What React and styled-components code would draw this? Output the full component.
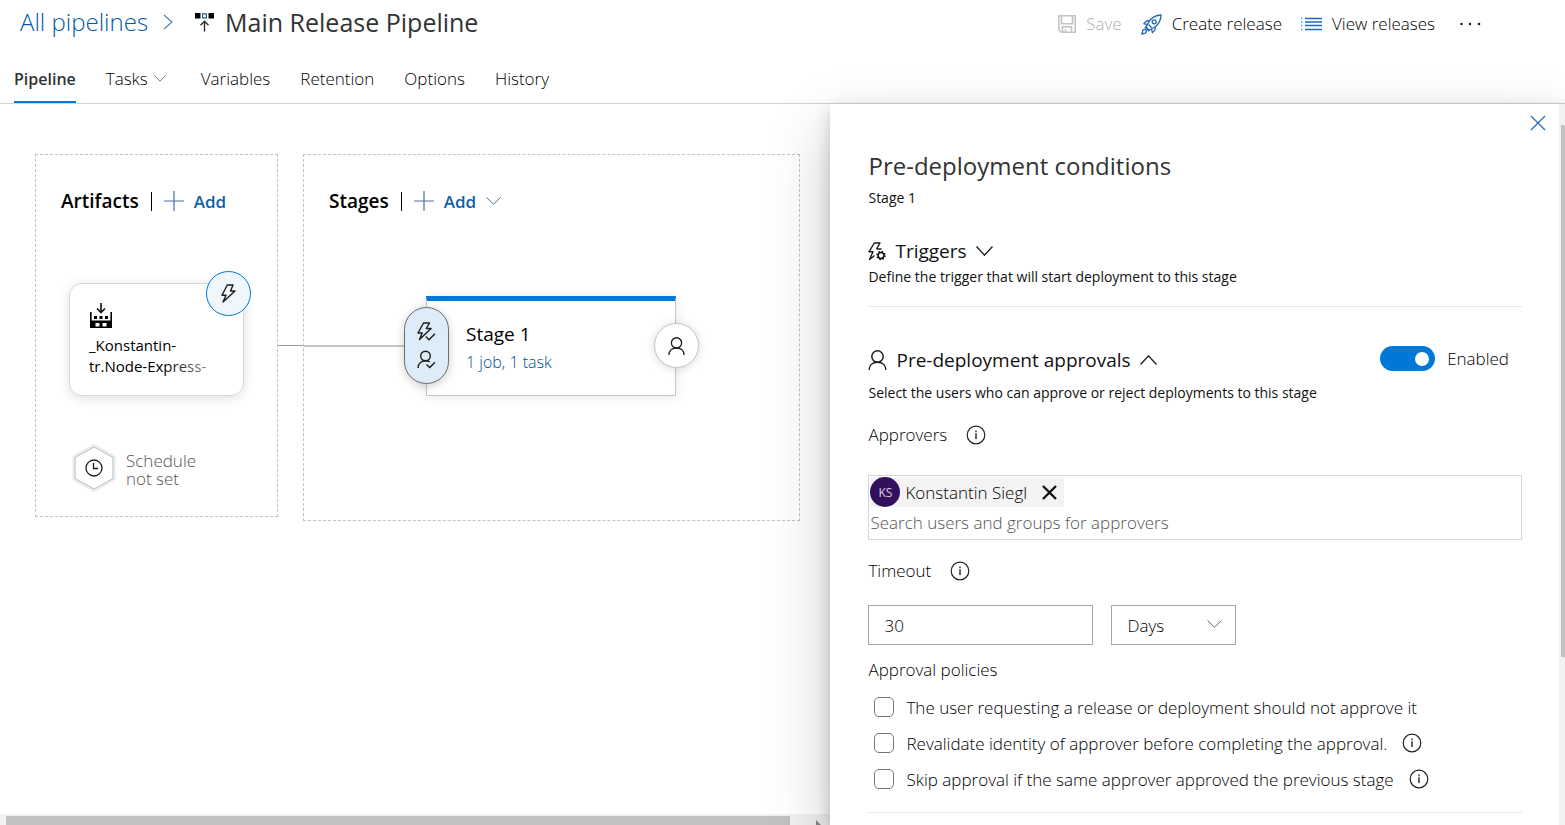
import React, { useState } from "react";
import styled, { createGlobalStyle } from "styled-components";

const GlobalStyle = createGlobalStyle`
  *, *::before, *::after { box-sizing: border-box; }
  html, body { margin: 0; height: 100%; overflow: hidden; }
  body, button, input, select {
    font-family: "Segoe UI", "Open Sans", "Noto Sans", sans-serif;
    font-weight: 300;
    color: #000;
  }
  body { font-size: 17px; background: #fff; }
  button { background: none; border: 0; padding: 0; font-size: inherit; cursor: pointer; }
  h1, h2, h3, p { margin: 0; font-weight: 400; }
  fieldset, legend { margin: 0; padding: 0; border: 0; }
  svg { display: block; flex: none; }
`;

const Page = styled.div`
  display: flex;
  flex-direction: column;
  height: 100vh;
`;

const Header = styled.header`
  border-bottom: 1px solid #d2d2d2;
`;

const TitleBar = styled.div`
  display: flex;
  align-items: center;
  justify-content: space-between;
  height: 46px;
  padding: 0 84px 0 20px;
`;

const Breadcrumb = styled.nav`
  display: flex;
  align-items: center;
  padding-bottom: 2px;
  font-size: 24px;
  line-height: 32px;
  a { color: #005aa8; font-weight: 300; text-decoration: none; }
  > svg:first-of-type { margin: 0 22px 0 15px; }
  h1 { margin-left: 11px; font-size: 25px; color: #333; }
`;

const Actions = styled.div`
  display: flex;
  align-items: center;
  gap: 19px;
  padding-top: 2px;
  > :last-child { padding-left: 6px; }
`;

const ActionButton = styled.button`
  display: flex;
  align-items: center;
  gap: 10px;
  line-height: 24px;
  &:disabled { color: #b0b0b0; cursor: default; }
`;

const Tabs = styled.nav`
  display: flex;
  gap: 30px;
  padding: 0 14px;
`;

const Tab = styled.a`
  display: flex;
  align-items: center;
  gap: 6px;
  height: 57px;
  padding: 10px ${(p) => (p.$menu ? "5px" : "0")} 0 0;
  border-bottom: 2px solid ${(p) => (p.$active ? "#0078d7" : "transparent")};
  font-size: ${(p) => (p.$active ? "16px" : "17px")};
  font-weight: ${(p) => (p.$active ? 600 : 300)};
  color: ${(p) => (p.$active ? "#333" : "#000")};
  text-decoration: none;
`;

const Body = styled.div`
  display: flex;
  flex: 1;
  min-height: 0;
`;

const Workspace = styled.main`
  display: flex;
  flex-direction: column;
  flex: 1;
  min-width: 0;
`;

const Canvas = styled.div`
  display: flex;
  align-items: flex-start;
  flex: 1;
  padding: 50px 30px 0 35px;
`;

const Group = styled.section`
  flex: ${(p) => (p.$grow ? "1" : "0 0 243px")};
  border: 1px dashed #c2c2c2;
  padding: ${(p) => (p.$grow ? "32px 0 124px" : "32px 33px 24px")};
`;

const GroupHeader = styled.div`
  display: flex;
  align-items: center;
  height: 28px;
  margin-left: ${(p) => p.$indent}px;
  white-space: nowrap;
  h2 {
    padding-right: 12px;
    border-right: 1px solid #000;
    font-size: 19px;
    font-weight: 600;
    line-height: 19px;
    color: #000;
  }
`;

const AddButton = styled.button`
  display: flex;
  align-items: center;
  gap: 10px;
  margin-left: 12px;
  font-size: 17px;
  font-weight: 600;
  color: #0f5fa8;
`;

const ArtifactCard = styled.article`
  position: relative;
  width: 175px;
  margin-top: 68px;
  padding: 19px 19px 18px;
  border: 1px solid #d6d6d6;
  border-radius: 13px;
  box-shadow: 0 2px 12px rgba(0, 0, 0, 0.13);
`;

const ArtifactName = styled.p`
  position: relative;
  margin-top: 7px;
  font-size: 15px;
  line-height: 21px;
  color: #000;
  white-space: nowrap;
  &::after {
    content: "";
    position: absolute;
    right: 0;
    bottom: 0;
    width: 60px;
    height: 21px;
    background: linear-gradient(90deg, rgba(255, 255, 255, 0), rgba(255, 255, 255, 0.75));
  }
`;

const RoundBadge = styled.button`
  position: absolute;
  display: flex;
  align-items: center;
  justify-content: center;
  width: 45px;
  height: 45px;
  border-radius: 50%;
`;

const TriggerBadge = styled(RoundBadge)`
  top: -13px;
  right: -8px;
  border: 1px solid #0078d7;
  background: #eff6fc;
`;

const PostBadge = styled(RoundBadge)`
  top: 22px;
  right: -24px;
  border: 1px solid #c4c4c4;
  background: #fff;
  box-shadow: 0 1px 10px rgba(0, 0, 0, 0.15);
`;

const Schedule = styled.button`
  display: flex;
  align-items: center;
  gap: 10px;
  margin: 48px 0 0 3px;
  line-height: 18px;
  text-align: left;
  color: #555;
  span { padding-top: 3px; }
`;

const Link = styled.div`
  flex: 0 0 25px;
  height: 1px;
  margin-top: 191px;
  background: #9b9b9b;
`;

const StageRow = styled.div`
  display: flex;
  align-items: center;
  margin-top: 81px;
`;

const StageLink = styled.div`
  flex: 0 0 122px;
  height: 2px;
  background: #c6c6c6;
`;

const StageCard = styled.article`
  position: relative;
  width: 250px;
  height: 100px;
  padding: 19px 0 0 39px;
  border: 1px solid #c4c4c4;
  border-top: 5px solid #0078d7;
  box-shadow: 0 1px 12px rgba(0, 0, 0, 0.1);
  h3 { font-size: 19px; line-height: 28px; color: #000; }
  a { display: block; font-size: 16px; line-height: 28px; color: #004f94; text-decoration: none; }
`;

const PreBadge = styled.button`
  position: absolute;
  top: 6px;
  left: -23px;
  display: flex;
  flex-direction: column;
  align-items: center;
  justify-content: center;
  gap: 9px;
  width: 45px;
  height: 77px;
  border: 1px solid #6e6e6e;
  border-radius: 23px;
  background: #deecf9;
  box-shadow: 0 2px 10px rgba(0, 0, 0, 0.2);
`;

const HorizontalScroll = styled.div`
  display: flex;
  justify-content: space-between;
  height: 11px;
  padding: 2px 8px 0 6px;
  background: #f1f1f1;
  overflow: hidden;
  svg { margin-top: 4px; }
`;

const HorizontalThumb = styled.div`
  width: 96%;
  height: 9px;
  background: #c1c1c1;
`;

const Panel = styled.aside`
  position: relative;
  display: flex;
  width: calc(47% - 1px);
  background: #fff;
  box-shadow: 0 25px 58px rgba(0, 0, 0, 0.22), 0 5px 14px rgba(0, 0, 0, 0.18);
`;

const PanelContent = styled.div`
  flex: 1;
  min-width: 0;
  padding: 0 37px 0 38px;
  overflow: hidden;
`;

const PanelTop = styled.div`
  display: flex;
  justify-content: flex-end;
  height: 46px;
  margin-right: -24px;
  padding-top: 11px;
  button { height: 16px; }
`;

const PanelTitle = styled.h2`
  font-size: 24px;
  line-height: 32px;
  color: #333;
`;

const SmallText = styled.p`
  margin-top: ${(p) => p.$top}px;
  font-size: 14px;
  line-height: 20px;
  color: #111;
`;

const Section = styled.section`
  padding: ${(p) => p.$top}px 0 19px;
  border-bottom: 1px solid #e8e8e8;
`;

const SectionBar = styled.div`
  display: flex;
  align-items: flex-start;
  justify-content: space-between;
`;

const SectionButton = styled.button`
  display: flex;
  align-items: center;
  gap: 9px;
  font-size: 19px;
  font-weight: 400;
  line-height: 28px;
  color: #111;
`;

const ToggleLabel = styled.label`
  display: flex;
  align-items: center;
  gap: 12px;
  margin-right: 13px;
  line-height: 22px;
`;

const Toggle = styled.input`
  appearance: none;
  display: flex;
  align-items: center;
  justify-content: ${(p) => (p.checked ? "flex-end" : "flex-start")};
  width: 55px;
  height: 25px;
  margin: 0;
  padding: 0 6px;
  border-radius: 13px;
  background: ${(p) => (p.checked ? "#0078d7" : "#8a8a8a")};
  &::before {
    content: "";
    width: 14px;
    height: 14px;
    border-radius: 50%;
    background: #fff;
  }
`;

const FieldLabel = styled.div`
  display: flex;
  align-items: center;
  gap: 19px;
  margin-top: ${(p) => p.$top}px;
  line-height: 24px;
`;

const InfoButton = styled.button`
  line-height: 0;
`;

const PeoplePicker = styled.div`
  margin-top: 28px;
  padding: 1px;
  border: 1px solid #d6d6d6;
  input {
    display: block;
    width: 100%;
    height: 31px;
    padding: 0;
    border: 0;
    outline: 0;
    font-size: 17px;
    &::placeholder { color: #555; opacity: 1; }
  }
`;

const Persona = styled.div`
  display: inline-flex;
  align-items: center;
  height: 30px;
  padding-right: 7px;
  background: #f3f3f3;
  vertical-align: top;
  color: #000;
  button { margin-left: 15px; }
`;

const Avatar = styled.span`
  display: flex;
  align-items: center;
  justify-content: center;
  width: 30px;
  height: 30px;
  margin-right: 5px;
  border-radius: 50%;
  background: #32105c;
  font-size: 12px;
  font-weight: 400;
  color: #d9d2e2;
`;

const Duration = styled.div`
  display: flex;
  gap: 18px;
  margin-top: 22px;
`;

const NumberInput = styled.input`
  width: 225px;
  height: 40px;
  padding: 0 15px;
  border: 1px solid #a6a6a6;
  font-size: 17px;
`;

const SelectBox = styled.div`
  position: relative;
  width: 125px;
  select {
    appearance: none;
    width: 100%;
    height: 40px;
    padding: 0 15px;
    border: 1px solid #a6a6a6;
    border-radius: 0;
    background: #fff;
    font-size: 17px;
  }
  svg { position: absolute; top: 15px; right: 14px; pointer-events: none; }
`;

const Policies = styled.fieldset`
  display: flex;
  flex-direction: column;
  gap: 12px;
  margin-top: 13px;
  padding-bottom: 2px;
  legend { margin-bottom: 13px; line-height: 24px; }
`;

const Policy = styled.div`
  display: flex;
  align-items: center;
  height: 24px;
  gap: 15px;
  padding-left: 6px;
  label { display: flex; align-items: center; gap: 12px; white-space: nowrap; }
  input {
    appearance: none;
    flex: none;
    width: 20px;
    height: 20px;
    margin: 0;
    border: 1px solid #767676;
    border-radius: 5px;
    background: #fff;
    &:checked { background: #0078d7; }
  }
`;

const VerticalScroll = styled.div`
  flex: 0 0 6px;
  padding: 21px 0 0 2px;
  background: #f1f1f1;
`;

const VerticalThumb = styled.div`
  height: 76%;
  background: #c1c1c1;
`;

function Icon({ w, h, color = "#1b1b1b", stroke = 1.4, children }) {
  return (
    <svg width={w} height={h} viewBox={`0 0 ${w} ${h}`} fill="none" stroke={color} strokeWidth={stroke} aria-hidden="true">
      {children}
    </svg>
  );
}

const Chevron = ({ w = 12, h = 7, up, color, stroke = 1 }) => (
  <Icon w={w} h={h} color={color} stroke={stroke}>
    <path d={up ? `M.5 ${h - 0.5}L${w / 2} .8 ${w - 0.5} ${h - 0.5}` : `M.5 .5L${w / 2} ${h - 0.8} ${w - 0.5} .5`} />
  </Icon>
);

const PlusIcon = () => (
  <Icon w={20} h={20} color="#4a6fa8" stroke={1.2}><path d="M10 0v20M0 10h20" /></Icon>
);

const CrossIcon = ({ size, color, stroke }) => (
  <Icon w={size} h={size} color={color} stroke={stroke}>
    <path d={`M1 1L${size - 1} ${size - 1}M${size - 1} 1L1 ${size - 1}`} />
  </Icon>
);

const ReleaseIcon = () => (
  <Icon w={19} h={19} color="#111">
    <path d="M0 0h5.500v5.500H0zM13.500 0H19v5.500h-5.500z" fill="#000" stroke="none" />
    <path d="M7.600 .8h3.800v4H7.600z" stroke="#2b5f8a" strokeWidth="1.200" />
    <path d="M9.500 18.500V8.500M5.500 12.300l4-4 4 4" stroke="#3a2a20" />
  </Icon>
);

const SaveIcon = () => (
  <Icon w={18} h={18} color="#c4c4c4" stroke={1.6}>
    <path d="M.8.8h16.4v16.4H3.3L.8 14.7zM3.5.8v8h11v-8M4.5 17v-5.2h9V17M7.5 17v-2.6" />
  </Icon>
);

const RocketIcon = () => (
  <Icon w={21} h={21} color="#2168b8" stroke={1.3}>
    <path d="M20 1c-5 .2-8.600 1.900-11.400 5.700L5 13l3.200 3.200 6.100-3.500C18.200 9.700 19.900 6 20 1z" />
    <circle cx="13.200" cy="7.800" r="2" />
    <path d="M9 6.700L5.500 7 3 9.600l3.500 1M14.300 12.500l-.3 3.500-2.600 2.600-1-3.800M7.500 10.500l3.200 3.200M5.300 12.500l-1 1 3.400 3.400 1-1" />
    <path d="M1 20l.8-3.600c.8-1.400 2.700-1.300 3.200-.3.600 1.100.2 2.400-.8 3z" />
  </Icon>
);

const ListIcon = () => (
  <Icon w={21} h={14} color="#2168b8" stroke={1.3}>
    <path d="M4 1.500h17M4 5h17M4 8.500h17M4 12.500h17" />
    <path d="M0 1.500h1.500M0 5h1.500M0 8.500h1.500M0 12.500h1.500" stroke="#4fa3dc" />
  </Icon>
);

const MoreIcon = () => (
  <Icon w={21} h={4}>
    <g fill="#222" stroke="none"><circle cx="1.500" cy="2" r="1.300" /><circle cx="10" cy="2" r="1.300" /><circle cx="19" cy="2" r="1.300" /></g>
  </Icon>
);

const BoltIcon = () => (
  <Icon w={15} h={19}><path d="M6.300 1H12L9.500 7H14L2 18l3-6.800H1z" strokeLinejoin="round" /></Icon>
);

const BoltCheckIcon = () => (
  <Icon w={19} h={19}>
    <path d="M6.500 1h6L9.300 6.500h4.800L2.500 17.500 5.200 11H1z" strokeLinejoin="round" />
    <path d="M8.800 14.500l3.200 3.200 6-6" />
  </Icon>
);

const PersonCheckIcon = () => (
  <Icon w={19} h={19}>
    <circle cx="8.500" cy="6" r="4.800" />
    <path d="M1 18c.2-4.300 3.300-7.200 7.500-7.200 1.600 0 3 .4 4.200 1.200" />
    <path d="M9.500 14.500l3.200 3 5.300-5.300" />
  </Icon>
);

const PersonIcon = ({ size = 18 }) => (
  <svg width={size} height={size + 1} viewBox="0 0 18 19" fill="none" stroke="#1b1b1b" strokeWidth="1.400" aria-hidden="true">
    <circle cx="9" cy="6.200" r="5.400" />
    <path d="M1 19c0-4.800 3.400-7.400 8-7.400s8 2.600 8 7.400" />
  </svg>
);

const BoltGearIcon = () => (
  <Icon w={18} h={19}>
    <path d="M8.500 7L12 1H6.300L1 9.800h4L1.500 17.500l5-4M8.500 7h5" strokeLinejoin="round" />
    <circle cx="13" cy="13.500" r="2.900" stroke="#111" strokeWidth="1.500" />
    <circle cx="13" cy="13.500" r="4" stroke="#111" strokeWidth="1.400" strokeDasharray="1.600 1.540" />
  </Icon>
);

const BuildIcon = () => (
  <Icon w={24} h={25} color="#111">
    <path d="M12 0v9.500M8 5.500l4 4 4-4" strokeWidth="1.600" />
    <path d="M1 9h1.600v8.500h18.800V9H23v16H1z" fill="#000" stroke="none" />
    <path d="M5 13h3v3H5zM10.500 13h3v3h-3zM16 13h3v3h-3z" fill="#000" stroke="none" />
    <path d="M6.500 20h4v3.500h-4zM13.500 20h4v3.500h-4z" fill="#fff" stroke="none" />
  </Icon>
);

const ScheduleIcon = () => (
  <Icon w={44} h={48}>
    <path d="M22 1.500l20 11.300v22.400L22 46.500 2 35.200V12.800z" stroke="#ececec" strokeWidth="3" />
    <path d="M22 3l19 10.500v21L22 45 3 34.500v-21z" fill="#fff" stroke="#bdbdbd" strokeWidth="1" />
    <circle cx="22" cy="24" r="8" strokeWidth="1.300" />
    <path d="M21.500 19v5.500H26" strokeWidth="1.300" />
  </Icon>
);

const InfoIcon = () => (
  <Icon w={20} h={20} color="#222" stroke={1.2}>
    <circle cx="10" cy="10" r="8.800" />
    <path d="M10 8.300V14M10 5.600v1.600" strokeWidth="1.400" />
  </Icon>
);

const Info = ({ label }) => (
  <InfoButton type="button" aria-label={label}><InfoIcon /></InfoButton>
);

const TABS = ["Pipeline", "Tasks", "Variables", "Retention", "Options", "History"];

const POLICIES = [
  { id: "requester", text: "The user requesting a release or deployment should not approve it" },
  { id: "revalidate", text: "Revalidate identity of approver before completing the approval.", info: true },
  { id: "skip", text: "Skip approval if the same approver approved the previous stage", info: true },
];

export default function App() {
  const [enabled, setEnabled] = useState(true);

  return (
    <Page>
      <GlobalStyle />
      <Header>
        <TitleBar>
          <Breadcrumb>
            <a href="#all">All pipelines</a>
            <Icon w={10} h={16} color="#4b84b8" stroke={1.2}><path d="M1 1l8 7-8 7" /></Icon>
            <ReleaseIcon />
            <h1>Main Release Pipeline</h1>
          </Breadcrumb>
          <Actions>
            <ActionButton disabled><SaveIcon />Save</ActionButton>
            <ActionButton><RocketIcon />Create release</ActionButton>
            <ActionButton><ListIcon />View releases</ActionButton>
            <ActionButton aria-label="More actions"><MoreIcon /></ActionButton>
          </Actions>
        </TitleBar>
        <Tabs>
          {TABS.map((name) => (
            <Tab key={name} href={`#${name}`} $active={name === "Pipeline"} $menu={name === "Tasks"}>
              {name}
              {name === "Tasks" && <Chevron color="#777" />}
            </Tab>
          ))}
        </Tabs>
      </Header>

      <Body>
        <Workspace>
          <Canvas>
            <Group>
              <GroupHeader $indent={-8}>
                <h2>Artifacts</h2>
                <AddButton><PlusIcon />Add</AddButton>
              </GroupHeader>
              <ArtifactCard>
                <BuildIcon />
                <ArtifactName>_Konstantin-<br />tr.Node-Express-</ArtifactName>
                <TriggerBadge aria-label="Continuous deployment trigger"><BoltIcon /></TriggerBadge>
              </ArtifactCard>
              <Schedule>
                <ScheduleIcon />
                <span>Schedule<br />not set</span>
              </Schedule>
            </Group>
            <Link />
            <Group $grow>
              <GroupHeader $indent={25}>
                <h2>Stages</h2>
                <AddButton><PlusIcon />Add<Chevron w={15} h={8} color="#4a6fa8" /></AddButton>
              </GroupHeader>
              <StageRow>
                <StageLink />
                <StageCard>
                  <h3>Stage 1</h3>
                  <a href="#tasks">1 job, 1 task</a>
                  <PreBadge aria-label="Pre-deployment conditions"><BoltCheckIcon /><PersonCheckIcon /></PreBadge>
                  <PostBadge aria-label="Post-deployment conditions"><PersonIcon size={17} /></PostBadge>
                </StageCard>
              </StageRow>
            </Group>
          </Canvas>
          <HorizontalScroll>
            <HorizontalThumb />
            <Icon w={6} h={8}><path d="M0 0l6 6v2H0z" fill="#8a8a8a" stroke="none" /></Icon>
          </HorizontalScroll>
        </Workspace>

        <Panel>
          <PanelContent>
            <PanelTop>
              <button aria-label="Close"><CrossIcon size={16} color="#2168b8" stroke={1.2} /></button>
            </PanelTop>
            <PanelTitle>Pre-deployment conditions</PanelTitle>
            <SmallText $top={6}>Stage 1</SmallText>

            <Section $top={29}>
              <SectionButton><BoltGearIcon />Triggers<Chevron w={17} h={10} stroke={1.3} /></SectionButton>
              <SmallText $top={2}>Define the trigger that will start deployment to this stage</SmallText>
            </Section>

            <Section $top={39}>
              <SectionBar>
                <SectionButton><PersonIcon size={19} />Pre-deployment approvals<Chevron w={17} h={10} up stroke={1.3} /></SectionButton>
                <ToggleLabel>
                  <Toggle type="checkbox" role="switch" checked={enabled} onChange={(e) => setEnabled(e.target.checked)} />
                  Enabled
                </ToggleLabel>
              </SectionBar>
              <SmallText $top={9}>Select the users who can approve or reject deployments to this stage</SmallText>

              <FieldLabel $top={20}><label htmlFor="approvers">Approvers</label><Info label="About approvers" /></FieldLabel>
              <PeoplePicker>
                <Persona>
                  <Avatar>KS</Avatar>
                  Konstantin Siegl
                  <button aria-label="Remove Konstantin Siegl"><CrossIcon size={15} color="#111" stroke={2.4} /></button>
                </Persona>
                <input id="approvers" placeholder="Search users and groups for approvers" />
              </PeoplePicker>

              <FieldLabel $top={19}><label htmlFor="timeout">Timeout</label><Info label="About timeout" /></FieldLabel>
              <Duration>
                <NumberInput id="timeout" defaultValue="30" />
                <SelectBox>
                  <select aria-label="Timeout unit" defaultValue="Days">
                    <option>Minutes</option>
                    <option>Hours</option>
                    <option>Days</option>
                  </select>
                  <Chevron w={15} h={8} color="#666" />
                </SelectBox>
              </Duration>

              <Policies>
                <legend>Approval policies</legend>
                {POLICIES.map((p) => (
                  <Policy key={p.id}>
                    <label><input type="checkbox" />{p.text}</label>
                    {p.info && <Info label={`About: ${p.text}`} />}
                  </Policy>
                ))}
              </Policies>
            </Section>
          </PanelContent>
          <VerticalScroll><VerticalThumb /></VerticalScroll>
        </Panel>
      </Body>
    </Page>
  );
}
